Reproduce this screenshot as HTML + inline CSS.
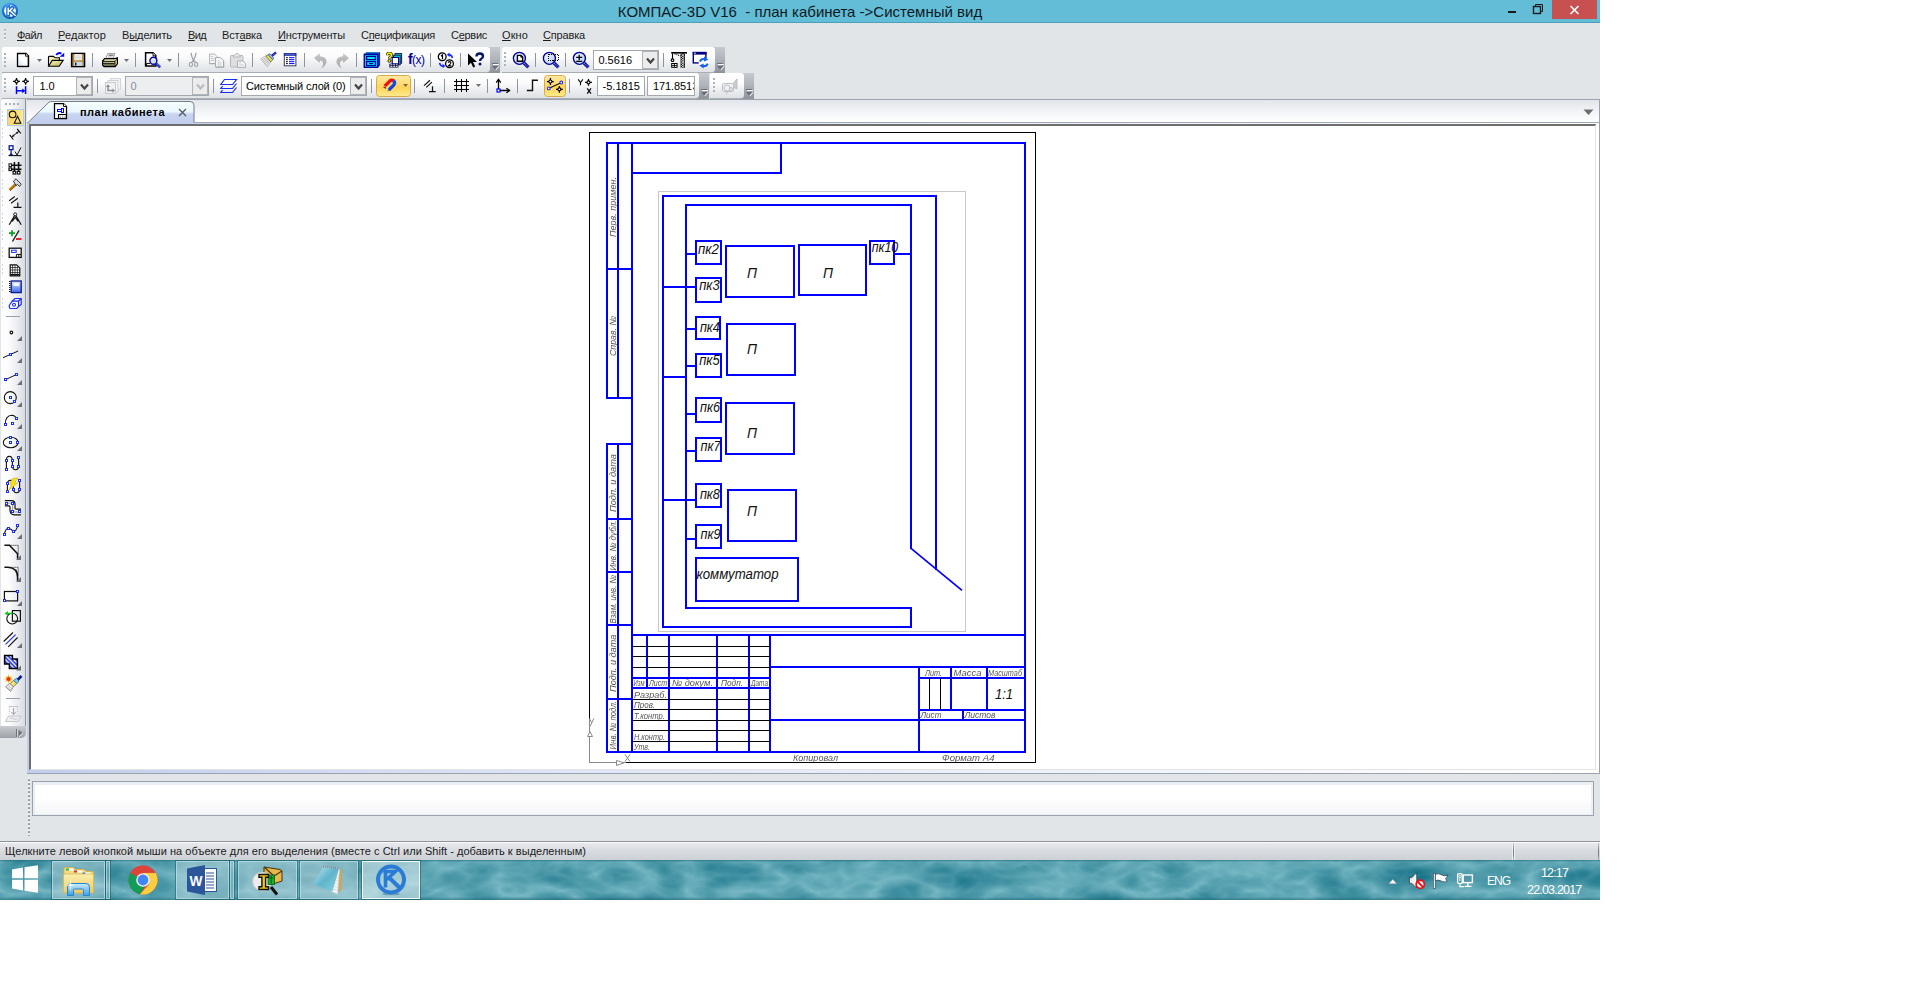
<!DOCTYPE html>
<html lang="ru"><head><meta charset="utf-8"><title>КОМПАС-3D V16 - план кабинета</title>
<style>

html,body{margin:0;padding:0;background:#fff;}
body{width:1920px;height:988px;position:relative;overflow:hidden;font-family:"Liberation Sans",sans-serif;}
#win{position:absolute;left:0;top:0;width:1600px;height:900px;background:#e1e5e8;overflow:hidden;}
.a{position:absolute;display:block;}
.t{position:absolute;white-space:pre;line-height:1;}
#titlebar{left:0;top:0;width:1600px;height:22px;background:#63bdd6;border-bottom:1px solid #4c9fb8;}
#title{left:617px;top:4px;font-size:15px;color:#0d1a1f;width:366px;text-align:center;}
#closebtn{left:1552px;top:0;width:45px;height:19px;background:#c75050;}
#menubar{left:0;top:23px;width:1600px;height:24px;background:#e1e5e8;}
.mi{top:30px;font-size:11px;color:#1c1c1c;}
.mi u{text-decoration:underline;text-decoration-thickness:1px;text-underline-offset:1px;}
.tb{background:linear-gradient(#ffffff 0%,#fbfbfc 40%,#e9ebee 75%,#dfe2e6 100%);border-radius:3px 3px 3px 0;box-shadow:0 1px 0 #a9aeb5;}
.tbend{background:linear-gradient(#c6cacf 0%,#b0b4bb 45%,#8e939b 100%);border-radius:0;}
.sep{width:1px;background:#8f959d;}
.combo{background:#fff;border:1px solid #a3a8ae;box-sizing:border-box;overflow:hidden;}
.combo .dd{position:absolute;right:0;top:0;bottom:0;width:16px;box-sizing:border-box;background:#ececec;border:1px solid #b1b5bb;}
.ctext{font-size:11px;color:#000;}
#tabbar{left:27px;top:99px;width:1573px;height:24px;box-sizing:border-box;background:linear-gradient(#e2e5ea 0%,#f0f2f5 45%,#ffffff 100%);border-top:1px solid #9ba3ae;border-right:1px solid #9ba3ae;border-bottom:1px solid #a0a8b4;}
#lefttb{left:1px;top:99px;width:24px;height:627px;background:linear-gradient(90deg,#ffffff 0%,#fbfbfc 35%,#eceef1 65%,#d9dce1 100%);border-radius:4px 0 0 0;border-right:1px solid #8e939b;}
#docframe{left:27px;top:123px;width:1573px;height:651px;background:linear-gradient(90deg,#c1cdeb 0%,#dfe6f7 35%,#ffffff 100%);}
#docframe .bR{right:0;top:0;bottom:0;width:1px;background:#9ba3ae;}
#docframe .bB{left:0;right:0;bottom:0;height:1px;background:#9ba3ae;}
#docinner{left:2px;top:1px;width:1567px;height:646px;background:#fff;box-sizing:border-box;border-left:2px solid #6e6e6e;border-top:2px solid #6e6e6e;border-right:1px solid #e3e3e3;border-bottom:1px solid #e3e3e3;}
#msgbox{left:32px;top:781px;width:1562px;height:35px;box-sizing:border-box;border:1px solid #9ca2ad;background:linear-gradient(#ffffff 0%,#ffffff 45%,#f4f5f7 100%);box-shadow:inset 0 3px 0 #ebeef3, inset 2px 0 0 #ebeef3, inset -2px 0 0 #ebeef3, inset 0 -1px 0 #ebeef3;}
#statusbar{left:0;top:841px;width:1600px;height:19px;box-sizing:border-box;border-top:1px solid #8c9199;background:linear-gradient(#fafbfc 0px,#fafbfc 1px,#e7e9ed 1px,#d8dbe0 50%,#cdd0d5 100%);}
#stattext{left:5px;top:846px;font-size:11px;color:#1a1a1a;}
#taskbar{left:0;top:860px;width:1600px;height:40px;background:#3f8b97;overflow:hidden;}
.tbtn{top:861px;height:38px;box-sizing:border-box;border:1px solid rgba(200,232,236,.62);background:rgba(205,226,230,.40);box-shadow:0 0 0 1px rgba(22,84,98,.5);}
.dr{font-family:"Liberation Sans",sans-serif;font-style:italic;}

</style></head>
<body>
<div id="win">
<div class="a" id="titlebar"></div>
<svg class="a" style="left:1px;top:2px" width="18" height="18" viewBox="0 0 18 18">
<defs><radialGradient id="kg" cx="42%" cy="22%" r="85%"><stop offset="0" stop-color="#4aa8f8"/><stop offset="0.55" stop-color="#1f74d6"/><stop offset="1" stop-color="#0f489e"/></radialGradient>
<clipPath id="kc"><circle cx="9" cy="9" r="5.9"/></clipPath></defs>
<circle cx="9" cy="9" r="8.1" fill="url(#kg)"/>
<circle cx="9" cy="9" r="5.9" fill="#fff"/>
<g clip-path="url(#kc)"><path d="M7.2 3V15.5M7.6 9.6L13 4.2M8.6 8.2L15.5 14.6" stroke="#1f6fd0" stroke-width="4" fill="none"/></g>
<path d="M7.2 5.6V13M7.8 9.4L11.6 5.8M9.2 8.8L14.6 13.8" stroke="#fff" stroke-width="1.4" fill="none"/>
</svg>
<span class="t" id="title">КОМПАС-3D V16  - план кабинета -&gt;Системный вид</span>
<div class="a" style="left:1508px;top:11px;width:8px;height:2px;background:#1a1a1a"></div>
<svg class="a" style="left:1532px;top:3px" width="13" height="12" viewBox="0 0 13 12"><path d="M3.5 3.5V1.5H10.5V8.5H8.5" fill="none" stroke="#1a1a1a" stroke-width="1"/><rect x="1.5" y="3.5" width="7" height="7" fill="none" stroke="#1a1a1a" stroke-width="1.4"/></svg>
<div class="a" id="closebtn"></div>
<svg class="a" style="left:1569px;top:5px" width="11" height="10" viewBox="0 0 11 10"><path d="M1.5 1L9.5 9M9.5 1L1.5 9" stroke="#fff" stroke-width="1.6" fill="none"/></svg>
<div class="a" id="menubar"></div>
<div class="a" style="left:4px;top:29px;width:2px;height:11px;background:repeating-linear-gradient(#b3bac4 0 2px,#f6f7f9 2px 3px,transparent 3px 4px)"></div>
<span class="t mi" style="left:17px;width:25px;letter-spacing:-0.516px"><u>Ф</u>айл</span>
<span class="t mi" style="left:58px;width:48px;letter-spacing:0.080px"><u>Р</u>едактор</span>
<span class="t mi" style="left:122px;width:50px;letter-spacing:-0.096px">В<u>ы</u>делить</span>
<span class="t mi" style="left:188px;width:18px;letter-spacing:-0.641px"><u>В</u>ид</span>
<span class="t mi" style="left:222px;width:40px;letter-spacing:-0.129px">Вст<u>а</u>вка</span>
<span class="t mi" style="left:278px;width:67px;letter-spacing:-0.145px"><u>И</u>нструменты</span>
<span class="t mi" style="left:361px;width:74px;letter-spacing:-0.272px">С<u>п</u>ецификация</span>
<span class="t mi" style="left:451px;width:36px;letter-spacing:-0.281px">С<u>е</u>рвис</span>
<span class="t mi" style="left:502px;width:26px;letter-spacing:0.105px"><u>О</u>кно</span>
<span class="t mi" style="left:543px;width:42px;letter-spacing:-0.167px"><u>С</u>правка</span>
<div class="a tbend" style="left:486px;top:47px;width:14px;height:26px;"></div>
<div class="a tb" style="left:2px;top:47px;width:488px;height:25px;"></div>
<div class="a tbend" style="left:710px;top:47px;width:15px;height:26px;"></div>
<div class="a tb" style="left:502px;top:47px;width:213px;height:25px;"></div>
<div class="a tbend" style="left:694px;top:73px;width:15px;height:26px;"></div>
<div class="a tb" style="left:2px;top:73px;width:697px;height:25px;"></div>
<div class="a tbend" style="left:739px;top:73px;width:15px;height:26px;"></div>
<div class="a tb" style="left:710px;top:73px;width:34px;height:25px;"></div>
<svg class="a" style="left:492px;top:63px" width="8" height="8" viewBox="0 0 8 8"><rect x="0" y="0" width="6" height="1" fill="#6b7078"/><rect x="1" y="1" width="6" height="1" fill="#fff"/><path d="M0 3H6.4L3.2 6.8Z" fill="#6b7078"/><path d="M6.9 3.3L3.8 7" stroke="#fff" stroke-width="1"/></svg>
<svg class="a" style="left:717px;top:63px" width="8" height="8" viewBox="0 0 8 8"><rect x="0" y="0" width="6" height="1" fill="#6b7078"/><rect x="1" y="1" width="6" height="1" fill="#fff"/><path d="M0 3H6.4L3.2 6.8Z" fill="#6b7078"/><path d="M6.9 3.3L3.8 7" stroke="#fff" stroke-width="1"/></svg>
<svg class="a" style="left:701px;top:89px" width="8" height="8" viewBox="0 0 8 8"><rect x="0" y="0" width="6" height="1" fill="#6b7078"/><rect x="1" y="1" width="6" height="1" fill="#fff"/><path d="M0 3H6.4L3.2 6.8Z" fill="#6b7078"/><path d="M6.9 3.3L3.8 7" stroke="#fff" stroke-width="1"/></svg>
<svg class="a" style="left:746px;top:89px" width="8" height="8" viewBox="0 0 8 8"><rect x="0" y="0" width="6" height="1" fill="#6b7078"/><rect x="1" y="1" width="6" height="1" fill="#fff"/><path d="M0 3H6.4L3.2 6.8Z" fill="#6b7078"/><path d="M6.9 3.3L3.8 7" stroke="#fff" stroke-width="1"/></svg>
<div class="a" style="left:4px;top:53px;width:2px;height:14px;background:repeating-linear-gradient(#aab2bd 0 2px,transparent 2px 4px)"></div>
<div class="a" style="left:4px;top:78px;width:2px;height:16px;background:repeating-linear-gradient(#aab2bd 0 2px,transparent 2px 4px)"></div>
<div class="a" style="left:504px;top:52px;width:2px;height:16px;background:repeating-linear-gradient(#aab2bd 0 2px,transparent 2px 4px)"></div>
<div class="a" style="left:713px;top:78px;width:2px;height:16px;background:repeating-linear-gradient(#aab2bd 0 2px,transparent 2px 4px)"></div>
<div class="a combo" style="left:593px;top:50px;width:66px;height:20px;background:#fff"><span class="t ctext" style="left:4.5px;top:4px;color:#000;width:33.5px;letter-spacing:-0.026px">0.5616</span><span class="dd"><svg class="a" style="left:3px;top:5px" width="9" height="8" viewBox="0 0 9 8"><path d="M1 1.5L4.5 5.5L8 1.5" fill="none" stroke="#454545" stroke-width="2.2"/></svg></span></div>
<div class="a combo" style="left:33px;top:76px;width:60px;height:20px;background:#fff"><span class="t ctext" style="left:5.5px;top:4px;color:#000;width:15px;letter-spacing:-0.099px">1.0</span><span class="dd"><svg class="a" style="left:3px;top:5px" width="9" height="8" viewBox="0 0 9 8"><path d="M1 1.5L4.5 5.5L8 1.5" fill="none" stroke="#454545" stroke-width="2.2"/></svg></span></div>
<div class="a combo" style="left:125px;top:76px;width:84px;height:20px;background:#eceef0"><span class="t ctext" style="left:4.5px;top:4px;color:#8a8f96">0</span><span class="dd"><svg class="a" style="left:3px;top:5px" width="9" height="8" viewBox="0 0 9 8"><path d="M1 1.5L4.5 5.5L8 1.5" fill="none" stroke="#b9bcc1" stroke-width="2.2"/></svg></span></div>
<div class="a combo" style="left:241px;top:76px;width:126px;height:20px;background:#fff"><span class="t ctext" style="left:4px;top:4px;color:#000;width:99.5px;letter-spacing:-0.148px">Системный слой (0)</span><span class="dd"><svg class="a" style="left:3px;top:5px" width="9" height="8" viewBox="0 0 9 8"><path d="M1 1.5L4.5 5.5L8 1.5" fill="none" stroke="#454545" stroke-width="2.2"/></svg></span></div>
<div class="a combo" style="left:597px;top:76px;width:48px;height:20px;background:#fff"><span class="t ctext" style="left:4.5px;top:4px;color:#000;width:37.5px;letter-spacing:0.027px">-5.1815</span></div>
<div class="a combo" style="left:647px;top:76px;width:48px;height:20px;background:#fff"><span class="t ctext" style="left:5px;top:4px;color:#000;width:39px;letter-spacing:-0.109px">171.851</span><span class="t ctext" style="left:44.6px;top:4px">3</span></div>
<div class="a" style="left:376px;top:75px;width:35px;height:22px;background:linear-gradient(#ffe9a2 0%,#ffd968 48%,#ffd257 55%,#ffe98c 100%);border:1px solid #d6aa48;border-radius:3.5px;box-sizing:border-box;"></div>
<div class="a" style="left:544px;top:75px;width:22px;height:22px;background:linear-gradient(#ffe9a2 0%,#ffd968 48%,#ffd257 55%,#ffe98c 100%);border:1px solid #d6aa48;border-radius:3.5px;box-sizing:border-box;"></div>
<div class="a sep" style="left:92px;top:53px;width:1px;height:14px;"></div>
<div class="a sep" style="left:135px;top:53px;width:1px;height:14px;"></div>
<div class="a sep" style="left:178px;top:53px;width:1px;height:14px;"></div>
<div class="a sep" style="left:252px;top:53px;width:1px;height:14px;"></div>
<div class="a sep" style="left:304px;top:53px;width:1px;height:14px;"></div>
<div class="a sep" style="left:356px;top:53px;width:1px;height:14px;"></div>
<div class="a sep" style="left:430px;top:53px;width:1px;height:14px;"></div>
<div class="a sep" style="left:460px;top:53px;width:1px;height:14px;"></div>
<div class="a sep" style="left:535px;top:53px;width:1px;height:14px;"></div>
<div class="a sep" style="left:565px;top:53px;width:1px;height:14px;"></div>
<div class="a sep" style="left:663px;top:53px;width:1px;height:14px;"></div>
<div class="a sep" style="left:97px;top:79px;width:1px;height:14px;"></div>
<div class="a sep" style="left:213px;top:79px;width:1px;height:14px;"></div>
<div class="a sep" style="left:371px;top:79px;width:1px;height:14px;"></div>
<div class="a sep" style="left:414px;top:79px;width:1px;height:14px;"></div>
<div class="a sep" style="left:444px;top:79px;width:1px;height:14px;"></div>
<div class="a sep" style="left:487px;top:79px;width:1px;height:14px;"></div>
<div class="a sep" style="left:517px;top:79px;width:1px;height:14px;"></div>
<div class="a sep" style="left:569px;top:79px;width:1px;height:14px;"></div>
<div class="a" id="docframe"><div class="a bR"></div><div class="a bB"></div><div class="a" id="docinner"></div></div>
<div class="a" id="tabbar"></div>
<svg class="a" style="left:27px;top:100px" width="180" height="24" viewBox="0 0 180 24">
<defs><linearGradient id="tabg" x1="0" y1="0" x2="0" y2="1"><stop offset="0" stop-color="#f4feff"/><stop offset="0.45" stop-color="#ebf7fe"/><stop offset="0.56" stop-color="#c8d5f1"/><stop offset="1" stop-color="#c1cdeb"/></linearGradient></defs>
<path d="M0 24L0.5 23L22 2.2Q23 1.5 25 1.5H163Q167 1.5 167 5.5V24Z" fill="url(#tabg)"/>
<path d="M0.5 23L22 2.2Q23 1.5 25 1.5H163Q167 1.5 167 5.5V22.5" fill="none" stroke="#767c88" stroke-width="1"/>
</svg>
<svg class="a" style="left:53px;top:102px" width="15" height="18" viewBox="0 0 15 18">
<path d="M1.5 1.5H10.5L13.5 4.5V16.5H1.5Z" fill="#fff" stroke="#000" stroke-width="1.25"/><path d="M10.5 1.5V4.5H13.5" fill="#fff" stroke="#000" stroke-width="0.9"/>
<rect x="8.5" y="6.5" width="2" height="4" fill="#fff" stroke="#0000ff" stroke-width="1" shape-rendering="crispEdges"/><rect x="4.5" y="7.5" width="4" height="2" fill="#fff" stroke="#0000ff" stroke-width="1" shape-rendering="crispEdges"/>
<path d="M5.5 16.5V12.5H13.5" fill="none" stroke="#000" stroke-width="1.1"/><path d="M6.6 14H8M9 14H10.4M11.4 14H12.8M6.6 15.5H8M9 15.5H10.4M11.4 15.5H12.8" stroke="#8c8c8c" stroke-width="0.9"/></svg>
<span class="t" id="tabtext" style="left:80px;top:107px;font-size:11px;font-weight:bold;color:#000;width:85px;letter-spacing:0.480px">план кабинета</span>
<svg class="a" style="left:178px;top:108px" width="9" height="9" viewBox="0 0 9 9"><path d="M1 1L8 8M8 1L1 8" stroke="#55595f" stroke-width="1.3"/></svg>
<svg class="a" style="left:1583px;top:109px" width="11" height="7" viewBox="0 0 11 7"><path d="M0.5 0.5H10.5L5.5 6Z" fill="#6e6e6e"/></svg>
<div class="a" id="lefttb"></div>
<div class="a" style="left:0px;top:726px;width:26px;height:12px;background:linear-gradient(#c9ccd1,#9da2a9);border-radius:0 0 5px 0"></div>
<svg class="a" style="left:16px;top:729px" width="8" height="9" viewBox="0 0 8 9"><path d="M1 0.5V8.5" stroke="#fff" stroke-width="1"/><path d="M3 1L7 4.5L3 8Z" fill="#fff"/><path d="M0.5 0V8" stroke="#6b7078" stroke-width="1"/><path d="M2.5 0.5L6.5 4L2.5 7.5Z" fill="#6b7078"/></svg>
<div class="a" style="left:5px;top:103px;width:16px;height:2px;background:repeating-linear-gradient(90deg,#aab2bd 0 2px,transparent 2px 4px)"></div>
<div class="a" style="left:7px;top:109px;width:17px;height:17px;background:linear-gradient(90deg,#ffd56a,#ffe88c);border:1px solid #a9cdee;box-sizing:border-box;"></div>
<div class="a" style="left:2px;top:109px;width:1px;height:204px;background:repeating-linear-gradient(transparent 0 2px,#ccd3e2 2px 4px,transparent 4px 6px,#ccd3e2 6px 8px,transparent 8px 10px,#ccd3e2 10px 12px,transparent 12px 17px)"></div>
<div class="a" style="left:6px;top:316px;width:14px;height:1px;background:#9a9fa6"></div>
<div class="a" style="left:6px;top:698px;width:14px;height:1px;background:#9a9fa6"></div>
<div class="a" style="left:28px;top:778px;width:2px;height:58px;background:repeating-linear-gradient(#ffffff 0 1px,#9aa1ab 1px 3px,transparent 3px 4px)"></div>
<div class="a" id="msgbox"></div>
<div class="a" id="statusbar"></div>
<span class="t" id="stattext" style="width:581px;letter-spacing:0.039px">Щелкните левой кнопкой мыши на объекте для его выделения (вместе с Ctrl или Shift - добавить к выделенным)</span>
<div class="a" style="left:1512px;top:843px;width:3px;height:17px;background:linear-gradient(90deg,#eef0f3 0 1px,transparent 1px 2px,#eef0f3 2px 3px)"></div>
<div class="a" style="left:1513px;top:843px;width:1px;height:17px;background:linear-gradient(#c2c5ca,#7c7f85 45%,#7c7f85 70%,#b8bbc0)"></div>
<div class="a" style="left:1598px;top:843px;width:1px;height:17px;background:linear-gradient(#c2c5ca,#7c7f85 45%,#7c7f85 70%,#b8bbc0)"></div>
<svg class="a" style="left:16px;top:52px" width="14" height="16" viewBox="0 0 14 16"><defs><linearGradient id="ndg" x1="1" y1="0" x2="0" y2="1"><stop offset="0.5" stop-color="#fff"/><stop offset="1" stop-color="#cfe0f6"/></linearGradient></defs><path d="M1.5 1.5H10L12.3 3.8V14.3H1.5Z" fill="url(#ndg)" stroke="#000" stroke-width="1.3"/><path d="M12.7 3.5V14.7H1.2" fill="none" stroke="#000" stroke-width="0.9"/><path d="M9.6 1.5V4.2H12.3" fill="#fff" stroke="#000" stroke-width="0.9"/></svg>
<svg class="a" style="left:37px;top:59px" width="5" height="3" viewBox="0 0 5 3"><path d="M0 0H5L2.5 3Z" fill="#6b6f76"/></svg>
<svg class="a" style="left:47px;top:51px" width="19" height="17" viewBox="0 0 19 17"><defs><linearGradient id="ofg" x1="0" y1="0" x2="1" y2="1"><stop offset="0" stop-color="#fbf8c8"/><stop offset="1" stop-color="#b9b24e"/></linearGradient></defs><path d="M1.5 15V6.2Q1.5 5.4 2.3 5.4H6.6L8 6.8H12.4V9.4" fill="#f4f0b4" stroke="#000" stroke-width="1.1"/><path d="M1.6 15.2L5.2 9.4H16.2L12.2 15.2Z" fill="url(#ofg)" stroke="#000" stroke-width="1.1"/><path d="M9.2 4Q11.2 0.8 14.4 2.6" fill="none" stroke="#0000ff" stroke-width="1.9"/><path d="M12.6 5.8H17.2V1.8Z" fill="#0000ff"/></svg>
<svg class="a" style="left:70px;top:52px" width="16" height="16" viewBox="0 0 16 16"><defs><linearGradient id="flg" x1="0" y1="0" x2="1" y2="0"><stop offset="0" stop-color="#8a6a30"/><stop offset="0.3" stop-color="#c9a35a"/><stop offset="1" stop-color="#b08840"/></linearGradient></defs><rect x="1.6" y="1.4" width="13" height="13.2" fill="url(#flg)" stroke="#000" stroke-width="1.4"/><rect x="4.4" y="2.2" width="7.5" height="6" fill="#fbfbfb"/><path d="M5 4H11.4M5 5.6H11.4M5 7.2H11.4" stroke="#c4c4c4" stroke-width="0.7"/><rect x="3.8" y="10" width="8.6" height="3.9" fill="#c4d6ea"/><rect x="5" y="10.6" width="1.4" height="2.9" fill="#111"/></svg>
<svg class="a" style="left:101px;top:52px" width="18" height="16" viewBox="0 0 18 16"><path d="M4.6 6.6L6.8 1.6H14L12 6.6Z" fill="#fff" stroke="#8a8a8a" stroke-width="0.9"/><path d="M7.6 3.2H12.4" stroke="#555" stroke-width="1.1"/><path d="M6.8 5H11.6" stroke="#9a9a9a" stroke-width="0.8"/><path d="M1.6 9L3.6 6.6H14.2L16.4 5.8V11.8L14.2 14.6H3L1.6 13Z" fill="#e6e2b0" stroke="#000" stroke-width="1.2"/><path d="M1.8 9.4H14L16.2 7.2M14 9.4V14.4" fill="none" stroke="#000" stroke-width="0.9"/><path d="M2 11.3H13.8M2.4 13H13.6" stroke="#000" stroke-width="1"/><path d="M14.6 12.6L15.8 11" stroke="#c8b020" stroke-width="1"/></svg>
<svg class="a" style="left:124px;top:59px" width="5" height="3" viewBox="0 0 5 3"><path d="M0 0H5L2.5 3Z" fill="#6b6f76"/></svg>
<svg class="a" style="left:144px;top:51px" width="18" height="18" viewBox="0 0 18 18"><path d="M1.6 1.8H9L11.8 4.6V15H1.6Z" fill="#fff" stroke="#000" stroke-width="1.5"/><path d="M9 1.8V4.8H11.8" fill="#fff" stroke="#000" stroke-width="0.9"/><path d="M2.6 15V12.4H6" fill="none" stroke="#000" stroke-width="1"/><circle cx="9.4" cy="9.8" r="3.5" fill="#d4e2ee" stroke="#00009a" stroke-width="1.4"/><path d="M8 8.2Q9.4 7.2 10.8 8.2" stroke="#fff" stroke-width="0.9" fill="none"/><path d="M12 12.4L16.2 16.2" stroke="#1a2ab8" stroke-width="2.6"/><path d="M12.6 12.4L16.4 15.8" stroke="#8a9af0" stroke-width="0.7"/></svg>
<svg class="a" style="left:167px;top:59px" width="5" height="3" viewBox="0 0 5 3"><path d="M0 0H5L2.5 3Z" fill="#6b6f76"/></svg>
<svg class="a" style="left:187px;top:52px" width="13" height="16" viewBox="0 0 13 16"><path d="M4 0.8Q4.6 5 6.6 8.6M9 0.8Q8.4 5 6.4 8.6" stroke="#9b9ea3" stroke-width="1.2" fill="none"/><path d="M6.6 8.2L4.6 10.4M6.4 8.2L8.6 10.4" stroke="#9b9ea3" stroke-width="1.1"/><ellipse cx="3.9" cy="12.4" rx="1.6" ry="2.1" fill="none" stroke="#9b9ea3" stroke-width="1.1"/><ellipse cx="9.1" cy="12.4" rx="1.6" ry="2.1" fill="none" stroke="#9b9ea3" stroke-width="1.1"/></svg>
<svg class="a" style="left:208px;top:52px" width="17" height="16" viewBox="0 0 17 16"><path d="M1.5 2H6.5L9 4.5V11.5H1.5Z" fill="#f4f4f4" stroke="#b4b6ba" stroke-width="1"/><path d="M7.5 5.5H12.5L15.5 8.5V15H7.5Z" fill="#f6f6f6" stroke="#a9acb0" stroke-width="1"/><path d="M1.5 11.8H7.2M15.8 8.8V15.3H7.8" stroke="#a0a3a7" stroke-width="0.8" fill="none"/><path d="M3 4.5H5M3 6.5H6.5M3 8.5H6.5M9.5 9H11.5M9.5 11H13.5M9.5 13H13.5" stroke="#c0c3c7" stroke-width="0.9"/></svg>
<svg class="a" style="left:229px;top:52px" width="18" height="16" viewBox="0 0 18 16"><rect x="1.5" y="3.5" width="12.5" height="11.5" rx="0.8" fill="#dedede" stroke="#b6b8bc" stroke-width="1"/><path d="M4.5 5V3.6Q5 3.2 6 3L6.8 1.6H9L9.8 3Q10.8 3.2 11.2 3.6V5Z" fill="#ececec" stroke="#b0b3b7" stroke-width="0.9"/><path d="M8.5 9H13.6L16.4 11.4V15.4H8.5Z" fill="#f8f8f8" stroke="#a9acb0" stroke-width="1"/><path d="M10 11H12M10 13H14.6" stroke="#c0c3c7" stroke-width="0.9"/></svg>
<svg class="a" style="left:260px;top:51px" width="17" height="17" viewBox="0 0 17 17"><path d="M11.9 4.9L16 1.4" stroke="#1a1aa0" stroke-width="2.4"/><path d="M12.6 4.3L15.6 1.8" stroke="#5a6ae0" stroke-width="0.7"/><path d="M5.9 4.9L10.9 10.9L7.2 15.7L0.5 7.8Z" fill="#fdfdfd" stroke="#9a9a9a" stroke-width="0.6"/><path d="M6.7 5.9L1.7 9.2M7.6 6.9L2.8 10.5M8.4 7.9L3.8 11.8M9.2 8.9L4.9 13.1M10.1 9.8L6.0 14.3M4.4 5.7L9.9 12.2M3.0 6.5L9.0 13.5M1.5 7.3L8.0 14.8" stroke="#a8a8a8" stroke-width="0.55" fill="none"/><path d="M8.3 3.6L12.6 8.6L10.9 10.9L5.9 4.9Z" fill="#f0e23c" stroke="#6a6a2a" stroke-width="0.7"/><path d="M10.1 2.8L13.7 7.0L12.6 8.6L8.3 3.6Z" fill="#a8d4f6" stroke="#2a4ac0" stroke-width="0.8"/></svg>
<svg class="a" style="left:283px;top:52px" width="14" height="15" viewBox="0 0 14 15"><rect x="1.3" y="1.6" width="11.6" height="12.2" fill="#fff" stroke="#3a3a5a" stroke-width="1"/><rect x="0.9" y="1.2" width="12.4" height="2.6" fill="#1c2c9c"/><path d="M2 2.3H12" stroke="#6a8ae8" stroke-width="0.7"/><path d="M3 5.7H4.8M3 7.7H4.8M3 9.7H4.8M3 11.6H4.8" stroke="#000" stroke-width="1"/><path d="M6 5.7H11.4M6 7.7H11.4M6 9.7H11.4M6 11.6H11.4" stroke="#0000ff" stroke-width="1"/></svg>
<svg class="a" style="left:313px;top:52px" width="16" height="17" viewBox="0 0 16 17"><defs><linearGradient id="udg" x1="0" y1="0" x2="0" y2="1"><stop offset="0" stop-color="#c8c8c8"/><stop offset="1" stop-color="#a4a4a4"/></linearGradient></defs><path d="M1 6L6.8 1.2V4.2Q13.4 4.4 13.6 9.6Q13.4 13.4 8.4 16.4Q10.8 13 10 10.6Q9.2 8.4 6.8 8.4V11Z" fill="url(#udg)"/></svg>
<svg class="a" style="left:334px;top:52px" width="16" height="17" viewBox="0 0 16 17"><path d="M15 6L9.2 1.2V4.2Q2.6 4.4 2.4 9.6Q2.6 13.4 7.6 16.4Q5.2 13 6 10.6Q6.8 8.4 9.2 8.4V11Z" fill="url(#udg)"/></svg>
<svg class="a" style="left:363px;top:52px" width="18" height="16" viewBox="0 0 18 16"><path d="M1.4 2.4L3.4 0.6H16.6V13.4L14.6 15.4H1.4Z" fill="#1030d8" stroke="#00009a" stroke-width="0.8"/><path d="M2 2L3.6 0.9H16" stroke="#30d0e8" stroke-width="0.8" fill="none"/><rect x="1.4" y="2.4" width="13.2" height="13" fill="#00f2ff" stroke="#00009a" stroke-width="1.5"/><rect x="3.6" y="4.4" width="8.8" height="3.2" fill="#00f2ff" stroke="#00009a" stroke-width="1.3"/><rect x="3.6" y="9.6" width="8.8" height="4" fill="#00f2ff" stroke="#00009a" stroke-width="1.3"/><path d="M6 11.6H10.2" stroke="#00009a" stroke-width="1.2"/></svg>
<svg class="a" style="left:386px;top:52px" width="17" height="16" viewBox="0 0 17 16"><rect x="9" y="1.6" width="6.6" height="9.6" fill="#00f2ff" stroke="#1a1a3a" stroke-width="1"/><rect x="7.6" y="3.2" width="6.6" height="9.6" fill="#00f2ff" stroke="#1a1a3a" stroke-width="1"/><rect x="6.2" y="5.4" width="6.4" height="6.6" fill="#fff" stroke="#00007a" stroke-width="1.2"/><rect x="3.4" y="11.7" width="9" height="3.8" fill="#00003a"/><path d="M4.4 12.8H6.4M7.2 12.8H9M9.8 12.8H11.6M4.4 14.4H6.4M7.2 14.4H9M9.8 14.4H11.6" stroke="#fff" stroke-width="0.9"/><path d="M1.3 3.2Q1.3 1.2 3.3 1.2Q5.4 1.2 5.4 3Q5.4 4.2 4.3 4.9Q3.4 5.4 3.4 6.6" fill="none" stroke="#000" stroke-width="2.9"/><path d="M1.3 3.2Q1.3 1.2 3.3 1.2Q5.4 1.2 5.4 3Q5.4 4.2 4.3 4.9Q3.4 5.4 3.4 6.6" fill="none" stroke="#ffee00" stroke-width="1.7"/><circle cx="3.4" cy="8.8" r="1.5" fill="#ffee00" stroke="#000" stroke-width="0.8"/></svg>
<span class="t" style="left:408px;top:52px;font-size:14px;font-weight:bold;color:#00009a;letter-spacing:-0.6px">f<span style="font-weight:normal;font-size:12px;letter-spacing:-0.5px;position:relative;top:-0.5px">(x)</span></span>
<svg class="a" style="left:437px;top:52px" width="18" height="17" viewBox="0 0 18 17"><circle cx="5.2" cy="4.8" r="3.9" fill="#fff" stroke="#000" stroke-width="1.3"/><path d="M4 4.2L5.5 2.8V7.2" fill="none" stroke="#000" stroke-width="1.2"/><circle cx="12.5" cy="11.7" r="3.9" fill="#fff" stroke="#000" stroke-width="1.3"/><path d="M11 10.6Q12.4 9 13.8 10.2Q14.4 11.4 11.2 13.9H14.4" fill="none" stroke="#000" stroke-width="1.1"/><path d="M11.4 2.6Q14.8 2.6 15.4 6" fill="none" stroke="#1a2aff" stroke-width="1.6"/><path d="M9.8 2.8L12.6 0.6V5Z" fill="#1a2aff"/><path d="M6.6 14.2Q3.2 14.4 2.6 10.8" fill="none" stroke="#1a2aff" stroke-width="1.6"/><path d="M8.4 14L5.6 11.8V16.2Z" fill="#1a2aff"/></svg>
<svg class="a" style="left:467px;top:52px" width="18" height="17" viewBox="0 0 18 17"><path d="M1 1.5V13.5L4 10.8L6.2 15.5L8.2 14.5L6 10H10Z" fill="#000"/><path d="M9.5 4.5Q9.5 1.5 12.8 1.5Q16 1.5 16 4.2Q16 6 14 7Q13 7.6 13 9" fill="none" stroke="#0a1466" stroke-width="2.4"/><circle cx="13" cy="12" r="1.5" fill="#0a1466"/></svg>
<svg class="a" style="left:512px;top:51px" width="18" height="18" viewBox="0 0 18 18"><defs><linearGradient id="lens512" x1="0" y1="0" x2="1" y2="1"><stop offset="0" stop-color="#f4f8ff"/><stop offset="1" stop-color="#b4ccf6"/></linearGradient></defs><path d="M12 12L16.4 16.4" stroke="#00009a" stroke-width="3.2"/><path d="M12.4 12.4L16.4 16.4" stroke="#9ab0ee" stroke-width="1.2" stroke-dasharray="0.8 0.8"/><circle cx="7.4" cy="7.3" r="6" fill="url(#lens512)" stroke="#00009a" stroke-width="1.35"/><path d="M5.4 4.4H9L10.6 6V10.2H5.4Z" fill="#fff" stroke="#000" stroke-width="1.4"/><path d="M8.8 4.4V6.2H10.6" fill="none" stroke="#000" stroke-width="0.9"/></svg>
<svg class="a" style="left:542px;top:51px" width="18" height="18" viewBox="0 0 18 18"><defs><linearGradient id="lens542" x1="0" y1="0" x2="1" y2="1"><stop offset="0" stop-color="#f4f8ff"/><stop offset="1" stop-color="#b4ccf6"/></linearGradient></defs><path d="M12 12L16.4 16.4" stroke="#00009a" stroke-width="3.2"/><path d="M12.4 12.4L16.4 16.4" stroke="#9ab0ee" stroke-width="1.2" stroke-dasharray="0.8 0.8"/><circle cx="7.4" cy="7.3" r="6" fill="url(#lens542)" stroke="#00009a" stroke-width="1.35"/><rect x="6.5" y="3.5" width="10" height="6" fill="none" stroke="#000" stroke-width="1.2" stroke-dasharray="1.1 1" shape-rendering="crispEdges"/></svg>
<svg class="a" style="left:572px;top:51px" width="18" height="18" viewBox="0 0 18 18"><defs><linearGradient id="lens572" x1="0" y1="0" x2="1" y2="1"><stop offset="0" stop-color="#f4f8ff"/><stop offset="1" stop-color="#b4ccf6"/></linearGradient></defs><path d="M12 12L16.4 16.4" stroke="#00009a" stroke-width="3.2"/><path d="M12.4 12.4L16.4 16.4" stroke="#9ab0ee" stroke-width="1.2" stroke-dasharray="0.8 0.8"/><circle cx="7.4" cy="7.3" r="6" fill="url(#lens572)" stroke="#00009a" stroke-width="1.35"/><path d="M4.2 6.4H10.2M7.2 3.8V9.2M4.2 10.4H10.2" stroke="#000" stroke-width="1.25"/></svg>
<svg class="a" style="left:670px;top:51px" width="18" height="18" viewBox="0 0 18 18"><rect x="1.2" y="1" width="15.8" height="1.6" fill="#000"/><rect x="10.6" y="2.4" width="4.4" height="14.4" fill="#000"/><path d="M11.3 3L14.3 5.3L11.3 7.6L14.3 9.9L11.3 12.2L14.3 14.5L11.3 16.6M14.3 3L11.3 5.3L14.3 7.6L11.3 9.9L14.3 12.2L11.3 14.5L14.3 16.6" stroke="#fff" stroke-width="0.75" fill="none"/><path d="M4.6 2.8L10.6 5" stroke="#000" stroke-width="1.2" stroke-dasharray="1 0.9"/><path d="M2.5 2.4V7.8" stroke="#000" stroke-width="1.1"/><circle cx="2.5" cy="9.2" r="1.35" fill="none" stroke="#000" stroke-width="1.1"/><rect x="1.2" y="12" width="6.4" height="4.8" fill="#000"/><path d="M2.2 13.5H3.9M4.9 13.5H6.6M2.2 15.3H3.9M4.9 15.3H6.6" stroke="#fff" stroke-width="1"/></svg>
<svg class="a" style="left:692px;top:51px" width="18" height="18" viewBox="0 0 18 18"><rect x="1.3" y="1.5" width="12.6" height="10.4" fill="#fff" stroke="#000080" stroke-width="1.4"/><rect x="0.8" y="1" width="13.6" height="2.6" fill="#000080"/><rect x="2" y="1.7" width="1.8" height="0.9" fill="#fff"/><circle cx="11.8" cy="11.6" r="5.2" fill="#fff"/><path d="M8 10.6Q9.2 7.4 12.6 8.2" fill="none" stroke="#1460f0" stroke-width="2.1"/><path d="M12 5.6L16.4 8.8L12 10.6Z" fill="#1460f0"/><path d="M15.6 12.6Q14.4 15.8 11 15" fill="none" stroke="#1460f0" stroke-width="2.1"/><path d="M11.6 12.6L7.2 14.4L11.6 17.6Z" fill="#1460f0"/></svg>
<svg class="a" style="left:12px;top:77px" width="18" height="18" viewBox="0 0 18 18"><path d="M1.1 4.4H7.9M4.5 1.0000000000000004V7.800000000000001" stroke="#000" stroke-width="1.25"/><circle cx="4.5" cy="4.4" r="1.5" fill="#fff" stroke="#000" stroke-width="1.15"/><path d="M10.2 4.4H17.0M13.6 1.0000000000000004V7.800000000000001" stroke="#000" stroke-width="1.25"/><circle cx="13.6" cy="4.4" r="1.5" fill="#fff" stroke="#000" stroke-width="1.15"/><path d="M4.5 9.2V17M13.6 9.2V17" stroke="#0000ff" stroke-width="1.5"/><path d="M4.5 13.8H12" stroke="#0000ff" stroke-width="1.5"/><path d="M13.4 13.8L10.2 11.4V16.2Z" fill="#0000ff"/></svg>
<svg class="a" style="left:103px;top:78px" width="19" height="16" viewBox="0 0 19 16"><rect x="7.5" y="0.5" width="10" height="11" fill="#f4f4f4" stroke="#d2d4d8" stroke-width="1"/><rect x="5" y="2.5" width="10" height="11.3" fill="#f4f4f4" stroke="#cdd0d4" stroke-width="1"/><rect x="2.5" y="4.5" width="10" height="11" fill="#f1f1f1" stroke="#c6c9cd" stroke-width="1"/><path d="M5 8V12.6H10" fill="none" stroke="#8a8d92" stroke-width="1.5"/><path d="M2.8 9L5 6.2L7.2 9ZM9.4 10.4L12 12.6L9.4 14.8Z" fill="#8a8d92"/></svg>
<svg class="a" style="left:220px;top:78px" width="18" height="16" viewBox="0 0 18 16"><path d="M4.5 1.5H16.5L12.5 6.5H0.8Z" fill="#fff" stroke="#1a2ff0" stroke-width="1.2"/><path d="M2.6 8.2L0.8 10.5H12.5L16.5 5.5" fill="none" stroke="#1a2ff0" stroke-width="1.2"/><path d="M2.6 12.2L0.8 14.5H12.5L16.5 9.5" fill="none" stroke="#1a2ff0" stroke-width="1.2"/></svg>
<svg class="a" style="left:382px;top:77px" width="17" height="17" viewBox="0 0 17 17"><path d="M2.7 9.2L8 3.9Q9.6 2.6 11.7 3.7" fill="none" stroke="#f01010" stroke-width="3.3"/><path d="M11.4 3.5Q13.6 5.6 11.8 7.9L6.8 13" fill="none" stroke="#1a4af0" stroke-width="3.3"/><path d="M1.6 10.2L4 11.2M5.6 14L8 12.4L12.6 8.4" fill="none" stroke="#0a1a90" stroke-width="0.9" opacity="0.7"/><path d="M1.7 10.4L3.9 11" stroke="#900" stroke-width="1"/></svg>
<svg class="a" style="left:403px;top:84px" width="5" height="3" viewBox="0 0 5 3"><path d="M0 0H5L2.5 3Z" fill="#7a6a45"/></svg>
<svg class="a" style="left:423px;top:79px" width="15" height="14" viewBox="0 0 15 14"><path d="M1 6.6L7 1.25M3.25 8.4L8.9 3.1" stroke="#111" stroke-width="1.15"/><path d="M9.5 7.2V12.4M6 12.5H12.7" stroke="#111" stroke-width="1.25"/></svg>
<svg class="a" style="left:453px;top:78px" width="17" height="16" viewBox="0 0 17 16"><path d="M1 3.5H16M1 7.5H16M1 11.5H16M3.5 1V14M8.5 1V14M13.5 1V14" stroke="#000" stroke-width="1" shape-rendering="crispEdges"/><g fill="#000" opacity="0.55"><circle cx="3.5" cy="3.5" r="1.1"/><circle cx="8.5" cy="3.5" r="1.1"/><circle cx="13.5" cy="3.5" r="1.1"/><circle cx="3.5" cy="7.5" r="1.1"/><circle cx="8.5" cy="7.5" r="1.1"/><circle cx="13.5" cy="7.5" r="1.1"/><circle cx="3.5" cy="11.5" r="1.1"/><circle cx="8.5" cy="11.5" r="1.1"/><circle cx="13.5" cy="11.5" r="1.1"/></g></svg>
<svg class="a" style="left:476px;top:84px" width="5" height="3" viewBox="0 0 5 3"><path d="M0 0H5L2.5 3Z" fill="#6b6f76"/></svg>
<svg class="a" style="left:494px;top:78px" width="17" height="16" viewBox="0 0 17 16"><path d="M4.5 12.5V1.6M4.5 12.5H15.4" stroke="#000" stroke-width="1.3" fill="none"/><path d="M2.2 4.6L4.5 1.4L6.8 4.6M12.4 10.2L15.6 12.5L12.4 14.8" fill="none" stroke="#000" stroke-width="1.2"/><rect x="3" y="11" width="3" height="3" fill="#fff" stroke="#0000ff" stroke-width="1.2"/></svg>
<svg class="a" style="left:525px;top:79px" width="14" height="13" viewBox="0 0 14 13"><path d="M1.9 11.5H7.5V1.25H12.9" fill="none" stroke="#111" stroke-width="1.4"/></svg>
<svg class="a" style="left:546px;top:77px" width="18" height="18" viewBox="0 0 18 18"><path d="M1.0000000000000004 4.5H7.800000000000001M4.4 1.1V7.9" stroke="#000" stroke-width="1.25"/><circle cx="4.4" cy="4.5" r="1.5" fill="#fff" stroke="#000" stroke-width="1.15"/><path d="M10.0 12.3H16.8M13.4 8.9V15.700000000000001" stroke="#000" stroke-width="1.25"/><circle cx="13.4" cy="12.3" r="1.5" fill="#fff" stroke="#000" stroke-width="1.15"/><path d="M2.5 11.5L15.6 5.4" stroke="#111" stroke-width="1.1"/><circle cx="2.8" cy="11.4" r="1.4" fill="#fff" stroke="#1a2ff0" stroke-width="1.1"/><circle cx="15.3" cy="5.5" r="1.4" fill="#fff" stroke="#1a2ff0" stroke-width="1.1"/></svg>
<svg class="a" style="left:577px;top:78px" width="17" height="17" viewBox="0 0 17 17"><path d="M1.2 1.3L3.5 4.6L5.9 1.3M3.5 4.6V7.2" fill="none" stroke="#111" stroke-width="1.15"/><path d="M8.1 4.4H14.9M11.5 1.0000000000000004V7.800000000000001" stroke="#000" stroke-width="1.25"/><circle cx="11.5" cy="4.4" r="1.5" fill="#fff" stroke="#000" stroke-width="1.15"/><path d="M10.2 10.4L14 15.7M14 10.4L10.2 15.7" stroke="#111" stroke-width="1.3"/></svg>
<svg class="a" style="left:721px;top:77px" width="18" height="18" viewBox="0 0 18 18"><path d="M10 9L16 2V12Z" fill="#c9ccd0" stroke="#b3b6ba" stroke-width="0.8"/><rect x="1.5" y="6.5" width="11" height="8" rx="1" fill="#f1f1f1" stroke="#bcbfc3" stroke-width="1"/><circle cx="6" cy="11" r="3" fill="none" stroke="#bcbfc3" stroke-width="1"/><circle cx="10" cy="12" r="1.5" fill="none" stroke="#bcbfc3" stroke-width="1"/><path d="M5 17L8 13" stroke="#bcbfc3" stroke-width="1"/></svg>
<svg class="a" style="left:8px;top:110px" width="15" height="15" viewBox="0 0 15 15"><circle cx="4.6" cy="4.4" r="3.3" fill="none" stroke="#111" stroke-width="1.1"/><path d="M9.5 6.3L12.8 13.2H6.3Z" fill="none" stroke="#111" stroke-width="1.1"/></svg>
<svg class="a" style="left:8px;top:127px" width="15" height="14" viewBox="0 0 15 14"><path d="M3.5 10.2L11 4.2" stroke="#111" stroke-width="1"/><path d="M1.7 7.9L5.3 12.5M9.2 1.9L12.8 6.5" stroke="#111" stroke-width="1.2"/><path d="M3.9 9.9L6.65 9.24L5.15 7.36ZM10.6 4.5L9.35 7.04L7.85 5.16Z" fill="#111"/></svg>
<svg class="a" style="left:8px;top:144px" width="15" height="14" viewBox="0 0 15 14"><rect x="1.2" y="1.8" width="3.8" height="3.8" fill="#fff" stroke="#0a1a8a" stroke-width="1.3"/><path d="M3.1 5.6V9" stroke="#0a1a8a" stroke-width="1.2"/><path d="M1 11.2L3.1 8.6L5.2 11.2Z" fill="#0a1a8a"/><path d="M0.5 11.6H13.5" stroke="#111" stroke-width="1.1"/><path d="M7 7.5L9 11L13 3.5" fill="none" stroke="#111" stroke-width="1"/></svg>
<svg class="a" style="left:8px;top:161px" width="15" height="14" viewBox="0 0 15 14"><path d="M1 4.2H13.5M1 8.2H13.5M6.4 1V12M10.6 1V12" stroke="#111" stroke-width="1.6"/><rect x="1" y="2.8" width="2.6" height="2.6" fill="#fff" stroke="#111" stroke-width="1"/><rect x="1" y="6.9" width="2.6" height="2.6" fill="#fff" stroke="#111" stroke-width="1.2"/><rect x="5.1" y="10.4" width="2.6" height="2.6" fill="#fff" stroke="#111" stroke-width="1.2"/><rect x="9.3" y="10.4" width="2.6" height="2.6" fill="#fff" stroke="#111" stroke-width="1.2"/></svg>
<svg class="a" style="left:8px;top:178px" width="15" height="14" viewBox="0 0 15 14"><path d="M1.5 12L8.5 5.5" stroke="#c07a10" stroke-width="2.6"/><path d="M2 12.8L8.8 6.5" stroke="#7a4a05" stroke-width="0.8"/><path d="M5.5 3.2L8 0.8L13.2 6.2L11.6 8.4L9.4 6.4L8 7.6Z" fill="#d9dde2" stroke="#222" stroke-width="0.9"/></svg>
<svg class="a" style="left:8px;top:195px" width="15" height="14" viewBox="0 0 15 14"><path d="M1.2 5.8L6.8 1.5M3 8.3L9.8 3.3" stroke="#111" stroke-width="1.1"/><path d="M9.8 7.6V12.3M5.5 12.3H13.5" stroke="#111" stroke-width="1.2"/></svg>
<svg class="a" style="left:8px;top:212px" width="15" height="14" viewBox="0 0 15 14"><circle cx="7.2" cy="2.4" r="1.5" fill="#fff" stroke="#111" stroke-width="1"/><path d="M6.6 3.6L1.2 12.8M7.8 3.6L13.2 12.8M4.2 9.5L7.2 5.5L10.2 9.5" fill="none" stroke="#111" stroke-width="1.2"/></svg>
<svg class="a" style="left:8px;top:229px" width="15" height="14" viewBox="0 0 15 14"><path d="M11 1.5L4.5 12.5" stroke="#111" stroke-width="1.3"/><path d="M1 4.2H7M4 1.2V7.2" stroke="#10a020" stroke-width="1.8"/><path d="M8 10H13.5" stroke="#e81020" stroke-width="1.8"/></svg>
<svg class="a" style="left:8px;top:247px" width="15" height="12" viewBox="0 0 15 12"><rect x="1.2" y="1.2" width="12" height="9.2" fill="#fff" stroke="#111" stroke-width="1.3"/><rect x="3.6" y="3.2" width="4.6" height="2.2" fill="#fff" stroke="#1a2ff0" stroke-width="1"/><path d="M8.4 7.4H13M8.4 7.4V10M10.8 7.4V10" stroke="#111" stroke-width="1"/></svg>
<svg class="a" style="left:9px;top:264px" width="13" height="13" viewBox="0 0 13 13"><path d="M1.2 0.8H7.5L10.8 4V11.8H1.2Z" fill="#fff" stroke="#111" stroke-width="1.2"/><path d="M1.2 3.5H9M1.2 6H10.8M1.2 8.5H10.8M3.6 1V11.8M6 1V11.8M8.4 3.5V11.8" stroke="#111" stroke-width="0.7"/><path d="M1.2 10.6H10.8" stroke="#111" stroke-width="1.4"/></svg>
<svg class="a" style="left:8px;top:280px" width="15" height="14" viewBox="0 0 15 14"><defs><linearGradient id="nbg" x1="0" y1="0" x2="0" y2="1"><stop offset="0" stop-color="#dfe8ff"/><stop offset="1" stop-color="#3a6af0"/></linearGradient></defs><rect x="3.2" y="1" width="10" height="11.6" fill="url(#nbg)" stroke="#0a1a8a" stroke-width="1.3"/><rect x="5.5" y="3" width="5.5" height="3" fill="#f4f7ff"/><path d="M1.8 1V12.6" stroke="#222" stroke-width="1.6" stroke-dasharray="1 1"/></svg>
<svg class="a" style="left:8px;top:297px" width="15" height="13" viewBox="0 0 15 13"><path d="M1.2 8.5L4.2 4.2H10.5V9.5L8.8 11.5H2Q1.2 10.5 1.2 8.5Z" fill="#fff" stroke="#1a2ff0" stroke-width="1.2"/><path d="M4.2 4.2L7 1.5H13.2V7.5L10.5 9.5M10.5 4.2L13.2 1.5" fill="none" stroke="#1a2ff0" stroke-width="1.2"/><circle cx="6" cy="7.8" r="1.5" fill="none" stroke="#1a2ff0" stroke-width="1.1"/></svg>
<svg class="a" style="left:9px;top:330px" width="5" height="5" viewBox="0 0 5 5"><circle cx="2.4" cy="2.5" r="1.3" fill="#fff" stroke="#111" stroke-width="1.2"/></svg>
<svg class="a" style="left:17px;top:336px" width="5" height="5" viewBox="0 0 5 5"><path d="M5 0V5H0Z" fill="#6b6f76"/></svg>
<svg class="a" style="left:2px;top:349px" width="18" height="11" viewBox="0 0 18 11"><path d="M1 8.7L16.2 2" stroke="#111" stroke-width="1"/><rect x="7.5" y="4.5" width="2" height="2" fill="#fff" stroke="#1a2ff0" stroke-width="1" shape-rendering="crispEdges"/></svg>
<svg class="a" style="left:17px;top:358px" width="5" height="5" viewBox="0 0 5 5"><path d="M5 0V5H0Z" fill="#6b6f76"/></svg>
<svg class="a" style="left:3px;top:372px" width="16" height="10" viewBox="0 0 16 10"><path d="M2.6 7.6L13.3 2.6" stroke="#111" stroke-width="1"/><rect x="1.5" y="6.5" width="2" height="2" fill="#fff" stroke="#1a2ff0" stroke-width="1" shape-rendering="crispEdges"/><rect x="12.5" y="1.5" width="2" height="2" fill="#fff" stroke="#1a2ff0" stroke-width="1" shape-rendering="crispEdges"/></svg>
<svg class="a" style="left:17px;top:380px" width="5" height="5" viewBox="0 0 5 5"><path d="M5 0V5H0Z" fill="#6b6f76"/></svg>
<svg class="a" style="left:3px;top:390px" width="16" height="15" viewBox="0 0 16 15"><circle cx="7.3" cy="7.6" r="6" fill="none" stroke="#111" stroke-width="1.1"/><rect x="6.5" y="6.5" width="2" height="2" fill="#fff" stroke="#1a2ff0" stroke-width="1" shape-rendering="crispEdges"/><rect x="10.5" y="10.5" width="2" height="2" fill="#fff" stroke="#1a2ff0" stroke-width="1" shape-rendering="crispEdges"/></svg>
<svg class="a" style="left:17px;top:402px" width="5" height="5" viewBox="0 0 5 5"><path d="M5 0V5H0Z" fill="#6b6f76"/></svg>
<svg class="a" style="left:3px;top:413px" width="16" height="14" viewBox="0 0 16 14"><path d="M2.3 11.2Q2.3 2.5 9 2.3Q12 2.5 13.3 5.5" fill="none" stroke="#111" stroke-width="1.1"/><rect x="1.5" y="10.5" width="2" height="2" fill="#fff" stroke="#1a2ff0" stroke-width="1" shape-rendering="crispEdges"/><rect x="8.5" y="9.5" width="2" height="2" fill="#fff" stroke="#1a2ff0" stroke-width="1" shape-rendering="crispEdges"/><rect x="12.5" y="4.5" width="2" height="2" fill="#fff" stroke="#1a2ff0" stroke-width="1" shape-rendering="crispEdges"/></svg>
<svg class="a" style="left:17px;top:424px" width="5" height="5" viewBox="0 0 5 5"><path d="M5 0V5H0Z" fill="#6b6f76"/></svg>
<svg class="a" style="left:2px;top:435px" width="18" height="14" viewBox="0 0 18 14"><ellipse cx="8.7" cy="7.5" rx="7.4" ry="5.2" fill="none" stroke="#111" stroke-width="1.1"/><rect x="7.5" y="1.5" width="2" height="2" fill="#fff" stroke="#1a2ff0" stroke-width="1" shape-rendering="crispEdges"/><rect x="7.5" y="6.5" width="2" height="2" fill="#fff" stroke="#1a2ff0" stroke-width="1" shape-rendering="crispEdges"/><rect x="14.5" y="6.5" width="2" height="2" fill="#fff" stroke="#1a2ff0" stroke-width="1" shape-rendering="crispEdges"/></svg>
<svg class="a" style="left:17px;top:446px" width="5" height="5" viewBox="0 0 5 5"><path d="M5 0V5H0Z" fill="#6b6f76"/></svg>
<svg class="a" style="left:3px;top:454px" width="18" height="19" viewBox="0 0 18 19"><path d="M3.4 15.5V5.5Q3.6 2.2 6.4 2.4Q9.2 2.6 9.4 6V12Q9.6 16 12.6 15.8Q15.6 15.6 15.6 12.5V3.5" fill="none" stroke="#111" stroke-width="1.1"/><rect x="2.5" y="5.5" width="2" height="2" fill="#fff" stroke="#1a2ff0" stroke-width="1" shape-rendering="crispEdges"/><rect x="2.5" y="14.5" width="2" height="2" fill="#fff" stroke="#1a2ff0" stroke-width="1" shape-rendering="crispEdges"/><rect x="8.5" y="5.5" width="2" height="2" fill="#fff" stroke="#1a2ff0" stroke-width="1" shape-rendering="crispEdges"/><rect x="8.5" y="11.5" width="2" height="2" fill="#fff" stroke="#1a2ff0" stroke-width="1" shape-rendering="crispEdges"/><rect x="14.5" y="2.5" width="2" height="2" fill="#fff" stroke="#1a2ff0" stroke-width="1" shape-rendering="crispEdges"/><rect x="14.5" y="11.5" width="2" height="2" fill="#fff" stroke="#1a2ff0" stroke-width="1" shape-rendering="crispEdges"/></svg>
<svg class="a" style="left:3px;top:476px" width="19" height="20" viewBox="0 0 19 20"><path d="M4.4 16V7.5Q4.6 4.2 7.4 4.4Q10.2 4.6 10.4 8V13Q10.6 17 13.6 16.8Q16.6 16.6 16.6 13.5V4.5" fill="none" stroke="#111" stroke-width="1.1"/><rect x="3.5" y="6.5" width="2" height="2" fill="#fff" stroke="#1a2ff0" stroke-width="1" shape-rendering="crispEdges"/><rect x="3.5" y="14.5" width="2" height="2" fill="#fff" stroke="#1a2ff0" stroke-width="1" shape-rendering="crispEdges"/><rect x="9.5" y="12.5" width="2" height="2" fill="#fff" stroke="#1a2ff0" stroke-width="1" shape-rendering="crispEdges"/><rect x="15.5" y="3.5" width="2" height="2" fill="#fff" stroke="#1a2ff0" stroke-width="1" shape-rendering="crispEdges"/><rect x="15.5" y="12.5" width="2" height="2" fill="#fff" stroke="#1a2ff0" stroke-width="1" shape-rendering="crispEdges"/><path d="M9.5 2.5L15 1.8L11.6 7H14.6L5.5 14.5L8.8 8.2H6.6Z" fill="#f2e21a" stroke="#c8a800" stroke-width="0.5"/></svg>
<svg class="a" style="left:3px;top:498px" width="19" height="20" viewBox="0 0 19 20"><path d="M1.8 2.6H8.5Q12 2.6 12 6V10Q12 11.2 13.2 11.2H18" fill="none" stroke="#111" stroke-width="1.2"/><path d="M1.8 7.8H6Q7 7.8 7 9V12Q7 16.8 11.5 16.8H18" fill="none" stroke="#111" stroke-width="1.2"/><path d="M3 5.2H8.5Q9.6 5.4 9.6 7V11.5Q9.8 14 12.5 14H16.5" fill="none" stroke="#8a8a8a" stroke-width="0.9"/><rect x="2.5" y="4.5" width="2" height="2" fill="#fff" stroke="#1a2ff0" stroke-width="1" shape-rendering="crispEdges"/><rect x="8.5" y="4.5" width="2" height="2" fill="#fff" stroke="#1a2ff0" stroke-width="1" shape-rendering="crispEdges"/><rect x="8.5" y="12.5" width="2" height="2" fill="#fff" stroke="#1a2ff0" stroke-width="1" shape-rendering="crispEdges"/><rect x="15.5" y="12.5" width="2" height="2" fill="#fff" stroke="#1a2ff0" stroke-width="1" shape-rendering="crispEdges"/></svg>
<svg class="a" style="left:2px;top:522px" width="19" height="15" viewBox="0 0 19 15"><path d="M2.4 12.5Q3.5 6 6.4 6.2Q9 6.6 11.4 9.4Q14.5 9.2 15.6 4" fill="none" stroke="#111" stroke-width="1.1"/><rect x="1.5" y="11.5" width="2" height="2" fill="#fff" stroke="#1a2ff0" stroke-width="1" shape-rendering="crispEdges"/><rect x="5.5" y="5.5" width="2" height="2" fill="#fff" stroke="#1a2ff0" stroke-width="1" shape-rendering="crispEdges"/><rect x="10.5" y="8.5" width="2" height="2" fill="#fff" stroke="#1a2ff0" stroke-width="1" shape-rendering="crispEdges"/><rect x="14.5" y="2.5" width="2" height="2" fill="#fff" stroke="#1a2ff0" stroke-width="1" shape-rendering="crispEdges"/></svg>
<svg class="a" style="left:17px;top:534px" width="5" height="5" viewBox="0 0 5 5"><path d="M5 0V5H0Z" fill="#6b6f76"/></svg>
<svg class="a" style="left:3px;top:543px" width="18" height="18" viewBox="0 0 18 18"><path d="M1.4 2.3H6.4L14.6 10.8V15.8" fill="none" stroke="#111" stroke-width="1.6"/><path d="M6.4 2.3H15.2V10.8" fill="none" stroke="#111" stroke-width="1" stroke-dasharray="1 1"/><path d="M18 12V17H13Z" fill="#6b6f76"/></svg>
<svg class="a" style="left:3px;top:565px" width="18" height="18" viewBox="0 0 18 18"><path d="M1.4 2.3H5Q14.6 3 14.6 12V15.8" fill="none" stroke="#111" stroke-width="1.6"/><path d="M6.4 2.3H15.2V10.8" fill="none" stroke="#111" stroke-width="1" stroke-dasharray="1 1"/><path d="M18 12V17H13Z" fill="#6b6f76"/></svg>
<svg class="a" style="left:2px;top:589px" width="19" height="15" viewBox="0 0 19 15"><rect x="2.4" y="2.5" width="13.2" height="9.4" fill="none" stroke="#111" stroke-width="1.2"/><rect x="14.5" y="1.5" width="2" height="2" fill="#fff" stroke="#1a2ff0" stroke-width="1" shape-rendering="crispEdges"/><rect x="1.5" y="10.5" width="2" height="2" fill="#fff" stroke="#1a2ff0" stroke-width="1" shape-rendering="crispEdges"/></svg>
<svg class="a" style="left:17px;top:601px" width="5" height="5" viewBox="0 0 5 5"><path d="M5 0V5H0Z" fill="#6b6f76"/></svg>
<svg class="a" style="left:4px;top:609px" width="18" height="17" viewBox="0 0 18 17"><circle cx="8.2" cy="9.6" r="5.4" fill="none" stroke="#111" stroke-width="1.1"/><rect x="8.4" y="1.6" width="8" height="10.6" fill="none" stroke="#111" stroke-width="1.2"/><path d="M3 4.4H8.5" stroke="#10d020" stroke-width="1.4"/><path d="M0.5 4.4L4 2V6.8Z" fill="#10d020"/></svg>
<svg class="a" style="left:2px;top:631px" width="19" height="17" viewBox="0 0 19 17"><path d="M1.6 10.5L11 1.5M6.2 15.8L15.6 6.5" stroke="#111" stroke-width="1.1"/><path d="M3.6 13.4L13.6 3.6" stroke="#1a2ff0" stroke-width="1.1"/></svg>
<svg class="a" style="left:17px;top:643px" width="5" height="5" viewBox="0 0 5 5"><path d="M5 0V5H0Z" fill="#6b6f76"/></svg>
<svg class="a" style="left:3px;top:654px" width="19" height="17" viewBox="0 0 19 17"><defs><pattern id="ht" width="3" height="3" patternUnits="userSpaceOnUse" patternTransform="rotate(45)"><rect width="3" height="3" fill="#fff"/><rect width="3" height="1.6" fill="#1a2ff0"/></pattern></defs><path d="M1.6 1.4H9.4V5H14.4V14.4H6.4V10H1.6Z" fill="url(#ht)" stroke="#000" stroke-width="1.5"/><path d="M18 11.5V16.5H13Z" fill="#6b6f76"/></svg>
<svg class="a" style="left:4px;top:674px" width="19" height="19" viewBox="0 0 19 19"><path d="M13 6.5L17.5 2" stroke="#0a1a8a" stroke-width="2.6"/><path d="M9.5 6.5L12.5 4.2L15 7L12.8 9.6Z" fill="#7ec8f0" stroke="#2a5a9a" stroke-width="0.7"/><path d="M6 9.5L9.5 6.5L12.8 9.6L9.2 13Z" fill="#f1e36b" stroke="#555" stroke-width="0.7"/><path d="M1.5 12.5L6 9.5L9.2 13L6.5 17.5Z" fill="#f4f4f4" stroke="#777" stroke-width="0.7"/><path d="M3 12.8L7.2 16.2M4.4 11.6L8.2 15M2.4 13.8L6.6 17" stroke="#999" stroke-width="0.6"/><path d="M4.6 0.5V9.5M0.2 5H9M1.6 2L7.6 8M7.6 2L1.6 8" stroke="#f2d21a" stroke-width="1"/><circle cx="4.6" cy="5" r="2.3" fill="#f0281a" stroke="#f2a21a" stroke-width="0.9"/></svg>
<svg class="a" style="left:4px;top:705px" width="19" height="18" viewBox="0 0 19 18"><path d="M5 1.5H14" stroke="#c3c5c9" stroke-width="1"/><path d="M5.5 2V8.5M13.5 2V8.5" stroke="#c3c5c9" stroke-width="1" stroke-dasharray="1 1"/><path d="M9.5 3V9M7.3 7L9.5 9.5L11.7 7" fill="none" stroke="#a9acb1" stroke-width="1.1"/><path d="M4.5 11H17L14 16.5H1.5Z" fill="#f0f0f0" stroke="#c3c5c9" stroke-width="1"/><path d="M6 13Q9 12.5 10 14Q12 14.8 13.5 13.5" fill="none" stroke="#bbbdc2" stroke-width="0.9"/></svg>
<svg class="a" id="drawing" style="left:0;top:0" width="1600" height="860" viewBox="0 0 1600 860" shape-rendering="crispEdges">
<rect x="589" y="132" width="447" height="1" fill="#000"/><rect x="1035" y="132" width="1" height="631" fill="#000"/><rect x="626" y="762" width="410" height="1" fill="#000"/><rect x="589" y="132" width="1" height="587" fill="#000"/><rect x="589" y="719" width="1" height="44" fill="#8a8a8a"/><rect x="589" y="762" width="37" height="1" fill="#8a8a8a"/><rect x="658" y="191" width="308" height="1" fill="#c8c8c8"/><rect x="658" y="631" width="308" height="1" fill="#c8c8c8"/><rect x="658" y="191" width="1" height="441" fill="#c8c8c8"/><rect x="965" y="191" width="1" height="441" fill="#c8c8c8"/>
<rect x="606" y="142" width="420" height="2" fill="#0000ff"/><rect x="606" y="751" width="420" height="2" fill="#0000ff"/><rect x="1024" y="142" width="2" height="611" fill="#0000ff"/><rect x="606" y="142" width="2" height="257" fill="#0000ff"/><rect x="606" y="443" width="2" height="310" fill="#0000ff"/><rect x="631" y="142" width="2" height="611" fill="#0000ff"/><rect x="617" y="142" width="2" height="257" fill="#0000ff"/><rect x="617" y="443" width="2" height="310" fill="#0000ff"/><rect x="780" y="142" width="2" height="32" fill="#0000ff"/><rect x="631" y="172" width="151" height="2" fill="#0000ff"/><rect x="606" y="268" width="27" height="2" fill="#0000ff"/><rect x="606" y="397" width="27" height="2" fill="#0000ff"/><rect x="606" y="443" width="27" height="2" fill="#0000ff"/><rect x="606" y="518" width="27" height="2" fill="#0000ff"/><rect x="606" y="571" width="27" height="2" fill="#0000ff"/><rect x="606" y="624" width="27" height="2" fill="#0000ff"/><rect x="606" y="698" width="27" height="2" fill="#0000ff"/><rect x="631" y="634" width="395" height="2" fill="#0000ff"/>
<rect x="662" y="195" width="2" height="433" fill="#0000ff"/><rect x="662" y="195" width="275" height="2" fill="#0000ff"/><rect x="935" y="195" width="2" height="375" fill="#0000ff"/><rect x="662" y="626" width="250" height="2" fill="#0000ff"/><rect x="685" y="204" width="2" height="405" fill="#0000ff"/><rect x="685" y="204" width="227" height="2" fill="#0000ff"/><rect x="910" y="204" width="2" height="345" fill="#0000ff"/><rect x="685" y="607" width="227" height="2" fill="#0000ff"/><rect x="910" y="607" width="2" height="21" fill="#0000ff"/>
<rect x="695" y="240" width="27" height="2" fill="#0000ff"/><rect x="695" y="263" width="27" height="2" fill="#0000ff"/><rect x="695" y="240" width="2" height="25" fill="#0000ff"/><rect x="720" y="240" width="2" height="25" fill="#0000ff"/><rect x="695" y="277" width="27" height="2" fill="#0000ff"/><rect x="695" y="301" width="27" height="2" fill="#0000ff"/><rect x="695" y="277" width="2" height="26" fill="#0000ff"/><rect x="720" y="277" width="2" height="26" fill="#0000ff"/><rect x="695" y="316" width="26" height="2" fill="#0000ff"/><rect x="695" y="338" width="26" height="2" fill="#0000ff"/><rect x="695" y="316" width="2" height="24" fill="#0000ff"/><rect x="719" y="316" width="2" height="24" fill="#0000ff"/><rect x="695" y="353" width="27" height="2" fill="#0000ff"/><rect x="695" y="376" width="27" height="2" fill="#0000ff"/><rect x="695" y="353" width="2" height="25" fill="#0000ff"/><rect x="720" y="353" width="2" height="25" fill="#0000ff"/><rect x="695" y="397" width="27" height="2" fill="#0000ff"/><rect x="695" y="421" width="27" height="2" fill="#0000ff"/><rect x="695" y="397" width="2" height="26" fill="#0000ff"/><rect x="720" y="397" width="2" height="26" fill="#0000ff"/><rect x="695" y="437" width="27" height="2" fill="#0000ff"/><rect x="695" y="460" width="27" height="2" fill="#0000ff"/><rect x="695" y="437" width="2" height="25" fill="#0000ff"/><rect x="720" y="437" width="2" height="25" fill="#0000ff"/><rect x="695" y="483" width="27" height="2" fill="#0000ff"/><rect x="695" y="506" width="27" height="2" fill="#0000ff"/><rect x="695" y="483" width="2" height="25" fill="#0000ff"/><rect x="720" y="483" width="2" height="25" fill="#0000ff"/><rect x="695" y="524" width="27" height="2" fill="#0000ff"/><rect x="695" y="547" width="27" height="2" fill="#0000ff"/><rect x="695" y="524" width="2" height="25" fill="#0000ff"/><rect x="720" y="524" width="2" height="25" fill="#0000ff"/><rect x="869" y="240" width="26" height="2" fill="#0000ff"/><rect x="869" y="263" width="26" height="2" fill="#0000ff"/><rect x="869" y="240" width="2" height="25" fill="#0000ff"/><rect x="893" y="240" width="2" height="25" fill="#0000ff"/><rect x="685" y="253" width="12" height="2" fill="#0000ff"/><rect x="662" y="286" width="35" height="2" fill="#0000ff"/><rect x="685" y="328" width="12" height="2" fill="#0000ff"/><rect x="685" y="365" width="12" height="2" fill="#0000ff"/><rect x="662" y="376" width="25" height="2" fill="#0000ff"/><rect x="685" y="413" width="12" height="2" fill="#0000ff"/><rect x="685" y="450" width="12" height="2" fill="#0000ff"/><rect x="662" y="499" width="35" height="2" fill="#0000ff"/><rect x="685" y="538" width="12" height="2" fill="#0000ff"/><rect x="893" y="253" width="19" height="2" fill="#0000ff"/>
<rect x="725" y="245" width="70" height="2" fill="#0000ff"/><rect x="725" y="296" width="70" height="2" fill="#0000ff"/><rect x="725" y="245" width="2" height="53" fill="#0000ff"/><rect x="793" y="245" width="2" height="53" fill="#0000ff"/><rect x="798" y="244" width="69" height="2" fill="#0000ff"/><rect x="798" y="294" width="69" height="2" fill="#0000ff"/><rect x="798" y="244" width="2" height="52" fill="#0000ff"/><rect x="865" y="244" width="2" height="52" fill="#0000ff"/><rect x="726" y="323" width="70" height="2" fill="#0000ff"/><rect x="726" y="374" width="70" height="2" fill="#0000ff"/><rect x="726" y="323" width="2" height="53" fill="#0000ff"/><rect x="794" y="323" width="2" height="53" fill="#0000ff"/><rect x="725" y="402" width="70" height="2" fill="#0000ff"/><rect x="725" y="453" width="70" height="2" fill="#0000ff"/><rect x="725" y="402" width="2" height="53" fill="#0000ff"/><rect x="793" y="402" width="2" height="53" fill="#0000ff"/><rect x="727" y="489" width="70" height="2" fill="#0000ff"/><rect x="727" y="540" width="70" height="2" fill="#0000ff"/><rect x="727" y="489" width="2" height="53" fill="#0000ff"/><rect x="795" y="489" width="2" height="53" fill="#0000ff"/><rect x="695" y="557" width="104" height="2" fill="#0000ff"/><rect x="695" y="600" width="104" height="2" fill="#0000ff"/><rect x="695" y="557" width="2" height="45" fill="#0000ff"/><rect x="797" y="557" width="2" height="45" fill="#0000ff"/>
<rect x="646" y="634" width="2" height="54" fill="#0000ff"/><rect x="668" y="634" width="2" height="119" fill="#0000ff"/><rect x="716" y="634" width="2" height="119" fill="#0000ff"/><rect x="748" y="634" width="2" height="119" fill="#0000ff"/><rect x="769" y="634" width="2" height="119" fill="#0000ff"/><rect x="918" y="666" width="2" height="87" fill="#0000ff"/><rect x="950" y="666" width="2" height="45" fill="#0000ff"/><rect x="986" y="666" width="2" height="45" fill="#0000ff"/><rect x="962" y="709" width="2" height="12" fill="#0000ff"/><rect x="631" y="677" width="140" height="2" fill="#0000ff"/><rect x="631" y="687" width="140" height="2" fill="#0000ff"/><rect x="769" y="666" width="257" height="2" fill="#0000ff"/><rect x="918" y="677" width="108" height="2" fill="#0000ff"/><rect x="918" y="709" width="108" height="2" fill="#0000ff"/><rect x="769" y="719" width="257" height="2" fill="#0000ff"/><rect x="633" y="646" width="137" height="1" fill="#000"/><rect x="633" y="656" width="137" height="1" fill="#000"/><rect x="633" y="667" width="137" height="1" fill="#000"/><rect x="633" y="699" width="137" height="1" fill="#000"/><rect x="633" y="709" width="137" height="1" fill="#000"/><rect x="633" y="720" width="137" height="1" fill="#000"/><rect x="633" y="730" width="137" height="1" fill="#000"/><rect x="633" y="741" width="137" height="1" fill="#000"/><rect x="929" y="678" width="1" height="32" fill="#000"/><rect x="940" y="678" width="1" height="32" fill="#000"/>
</svg>
<svg class="a" id="drawtext" style="left:0;top:0" width="1600" height="860" viewBox="0 0 1600 860">
<path d="M911 548.3L962 590.3" stroke="#0000ff" stroke-width="1.7" fill="none"/>
<g stroke="#8a8a8a" stroke-width="1" fill="none"><path d="M589.5 718.5L591.5 722.5M593.8 718.5L590 726.5"/><path d="M587.5 736.5H592.5L590 731.5Z" fill="#fff"/><path d="M625 754.5L630 761.5M630 754.5L625 761.5"/><path d="M616.5 760.5V765.5L624 762.8Z" fill="#fff"/></g>
<g font-family="Liberation Sans, sans-serif" font-style="italic">
<text x="698" y="253.8" font-size="14" textLength="21" lengthAdjust="spacingAndGlyphs" fill="#111">пк2</text>
<text x="699.2" y="290.2" font-size="14" textLength="20.5" lengthAdjust="spacingAndGlyphs" fill="#111">пк3</text>
<text x="699.9" y="331.6" font-size="14" textLength="20" lengthAdjust="spacingAndGlyphs" fill="#111">пк4</text>
<text x="699.2" y="364.8" font-size="14" textLength="20.5" lengthAdjust="spacingAndGlyphs" fill="#111">пк5</text>
<text x="700" y="411.5" font-size="14" textLength="20" lengthAdjust="spacingAndGlyphs" fill="#111">пк6</text>
<text x="700.5" y="451" font-size="14" textLength="20" lengthAdjust="spacingAndGlyphs" fill="#111">пк7</text>
<text x="699.9" y="498.9" font-size="14" textLength="20" lengthAdjust="spacingAndGlyphs" fill="#111">пк8</text>
<text x="700.5" y="538.8" font-size="14" textLength="20" lengthAdjust="spacingAndGlyphs" fill="#111">пк9</text>
<text x="871.7" y="252" font-size="14" textLength="26.5" lengthAdjust="spacingAndGlyphs" fill="#111">пк10</text>
<text x="747" y="278" font-size="14" textLength="10" lengthAdjust="spacingAndGlyphs" fill="#111">П</text>
<text x="823" y="278" font-size="14" textLength="10" lengthAdjust="spacingAndGlyphs" fill="#111">П</text>
<text x="747" y="353.8" font-size="14" textLength="10" lengthAdjust="spacingAndGlyphs" fill="#111">П</text>
<text x="747" y="437.9" font-size="14" textLength="10" lengthAdjust="spacingAndGlyphs" fill="#111">П</text>
<text x="747" y="515.9" font-size="14" textLength="10" lengthAdjust="spacingAndGlyphs" fill="#111">П</text>
<text x="696.5" y="579" font-size="14" textLength="82" lengthAdjust="spacingAndGlyphs" fill="#111">коммутатор</text>
<text x="995" y="699" font-size="14" textLength="18" lengthAdjust="spacingAndGlyphs" fill="#111">1:1</text>
<text x="633.5" y="686" font-size="9" textLength="11" lengthAdjust="spacingAndGlyphs" fill="#2a2a2a" opacity="0.8">Изм</text>
<text x="649" y="686" font-size="9" textLength="18" lengthAdjust="spacingAndGlyphs" fill="#2a2a2a" opacity="0.8">Лист</text>
<text x="672" y="686" font-size="9" textLength="41" lengthAdjust="spacingAndGlyphs" fill="#2a2a2a" opacity="0.8">№ докум.</text>
<text x="721" y="686" font-size="9" textLength="22" lengthAdjust="spacingAndGlyphs" fill="#2a2a2a" opacity="0.8">Подп.</text>
<text x="751" y="686" font-size="9" textLength="17" lengthAdjust="spacingAndGlyphs" fill="#2a2a2a" opacity="0.8">Дата</text>
<text x="634" y="698" font-size="9" textLength="33" lengthAdjust="spacingAndGlyphs" fill="#2a2a2a" opacity="0.8">Разраб.</text>
<text x="634" y="708.3" font-size="9" textLength="21" lengthAdjust="spacingAndGlyphs" fill="#2a2a2a" opacity="0.8">Пров.</text>
<text x="634" y="719" font-size="9" textLength="31" lengthAdjust="spacingAndGlyphs" fill="#2a2a2a" opacity="0.8">Т.контр.</text>
<text x="634" y="740" font-size="9" textLength="31" lengthAdjust="spacingAndGlyphs" fill="#2a2a2a" opacity="0.8">Н.контр.</text>
<text x="634" y="750.3" font-size="9" textLength="16" lengthAdjust="spacingAndGlyphs" fill="#2a2a2a" opacity="0.8">Утв.</text>
<text x="925" y="675.5" font-size="9" textLength="17" lengthAdjust="spacingAndGlyphs" fill="#2a2a2a" opacity="0.8">Лит.</text>
<text x="953.5" y="675.5" font-size="9" textLength="28" lengthAdjust="spacingAndGlyphs" fill="#2a2a2a" opacity="0.8">Масса</text>
<text x="988" y="675.5" font-size="9" textLength="34" lengthAdjust="spacingAndGlyphs" fill="#2a2a2a" opacity="0.8">Масштаб</text>
<text x="920.5" y="718.3" font-size="9" textLength="21" lengthAdjust="spacingAndGlyphs" fill="#2a2a2a" opacity="0.8">Лист</text>
<text x="964.5" y="718.3" font-size="9" textLength="31" lengthAdjust="spacingAndGlyphs" fill="#2a2a2a" opacity="0.8">Листов</text>
<text x="793" y="761" font-size="9" textLength="45" lengthAdjust="spacingAndGlyphs" fill="#2a2a2a" opacity="0.8">Копировал</text>
<text x="942" y="761" font-size="9" textLength="52.5" lengthAdjust="spacingAndGlyphs" fill="#2a2a2a" opacity="0.8">Формат  А4</text>
<text transform="translate(616,237) rotate(-90)" font-size="9" textLength="60" lengthAdjust="spacingAndGlyphs" fill="#2a2a2a" opacity="0.8">Перв. примен.</text>
<text transform="translate(616,356) rotate(-90)" font-size="9" textLength="40" lengthAdjust="spacingAndGlyphs" fill="#2a2a2a" opacity="0.8">Справ. №</text>
<text transform="translate(616,512) rotate(-90)" font-size="9" textLength="58" lengthAdjust="spacingAndGlyphs" fill="#2a2a2a" opacity="0.8">Подп. и дата</text>
<text transform="translate(616,570.5) rotate(-90)" font-size="9" textLength="50.0" lengthAdjust="spacingAndGlyphs" fill="#2a2a2a" opacity="0.8">Инв. № дубл.</text>
<text transform="translate(616,623.5) rotate(-90)" font-size="9" textLength="48.5" lengthAdjust="spacingAndGlyphs" fill="#2a2a2a" opacity="0.8">Взам. инв. №</text>
<text transform="translate(616,692) rotate(-90)" font-size="9" textLength="57.299999999999955" lengthAdjust="spacingAndGlyphs" fill="#2a2a2a" opacity="0.8">Подп. и дата</text>
<text transform="translate(616,749.5) rotate(-90)" font-size="9" textLength="48.5" lengthAdjust="spacingAndGlyphs" fill="#2a2a2a" opacity="0.8">Инв. № подл.</text>
</g>
</svg>
<svg class="a" style="left:0;top:860px" width="1600" height="40" viewBox="0 0 1600 40">
<defs><filter id="water" x="0" y="0" width="100%" height="100%" color-interpolation-filters="sRGB">
<feTurbulence type="turbulence" baseFrequency="0.016 0.032" numOctaves="3" seed="11" result="n"/>
<feColorMatrix in="n" type="matrix" values="-0.42 0 0 0 0.475  -0.30 0 0 0 0.725  -0.27 0 0 0 0.775  0 0 0 0 1"/>
</filter>
<linearGradient id="tbedge" x1="0" y1="0" x2="0" y2="1"><stop offset="0" stop-color="#1d6a78" stop-opacity="0.7"/><stop offset="0.05" stop-color="#1d6a78" stop-opacity="0"/><stop offset="0.92" stop-color="#1d6a78" stop-opacity="0"/><stop offset="1" stop-color="#1d6a78" stop-opacity="0.6"/></linearGradient></defs>
<rect width="1600" height="40" fill="#4f97a6"/>
<rect width="1600" height="40" filter="url(#water)"/>
<rect width="1600" height="40" fill="url(#tbedge)"/>
</svg>
<div class="a tbtn" style="left:106px;width:4px;background:rgba(205,226,230,.30)"></div>
<div class="a tbtn" style="left:52px;width:53px;"></div>
<div class="a tbtn" style="left:230px;width:4px;background:rgba(205,226,230,.30)"></div>
<div class="a tbtn" style="left:176px;width:53px;"></div>
<div class="a tbtn" style="left:238px;width:59px;"></div>
<div class="a tbtn" style="left:300px;width:58px;"></div>
<div class="a tbtn" style="left:362px;width:58px;background:rgba(232,242,244,.55);border-color:rgba(248,253,253,.95);"></div>
<svg class="a" style="left:11px;top:865px" width="28" height="28" viewBox="0 0 28 28"><path d="M1 4.5L12 2.5V13.2H1ZM13.5 2.2L27 0.2V13.2H13.5ZM1 14.8H12V25.5L1 23.5ZM13.5 14.8H27V27.8L13.5 25.8Z" fill="#fff"/></svg>
<svg class="a" style="left:62px;top:866px" width="33" height="31" viewBox="0 0 33 31"><defs><linearGradient id="fg" x1="0" y1="0" x2="0" y2="1"><stop offset="0" stop-color="#fbefae"/><stop offset="1" stop-color="#eccb62"/></linearGradient><linearGradient id="fb" x1="0" y1="0" x2="0" y2="1"><stop offset="0" stop-color="#c9ecfb"/><stop offset="1" stop-color="#3a9ee6"/></linearGradient></defs><path d="M2 3Q2 1.5 3.5 1.5H11L13 3.5H22L24 5.5H30Q31.5 5.5 31.5 7V26H2Z" fill="#f3dc8a" stroke="#d9b64c" stroke-width="1"/><rect x="4" y="2.5" width="3" height="2" fill="#18c038"/><rect x="6.8" y="2.5" width="5" height="2" fill="#fff"/><rect x="12" y="4.5" width="3" height="2" fill="#e0301a"/><rect x="15" y="4.5" width="5" height="2" fill="#fff"/><rect x="20.5" y="6.5" width="3" height="2" fill="#2a8ae8"/><rect x="23.5" y="6.5" width="5" height="2" fill="#fff"/><path d="M1.5 9Q1.5 8 2.5 8H30.5Q31.5 8 31.5 9V26Q31.5 27 30.5 27H2.5Q1.5 27 1.5 26Z" fill="url(#fg)" stroke="#d9b64c" stroke-width="0.8"/><path d="M5.5 29.5V21Q5.5 17.5 9 17.5H24Q27.5 17.5 27.5 21V29.5H21.5V24Q21.5 23 20.5 23H12.5Q11.5 23 11.5 24V29.5Z" fill="url(#fb)" stroke="#2a86d0" stroke-width="1"/><path d="M8.5 12L9.2 18.3L14 19L9.2 19.8L8.5 26L7.8 19.8L3.5 19L7.8 18.3Z" fill="#fff" opacity="0.85"/></svg>
<svg class="a" style="left:128px;top:865px" width="30" height="30" viewBox="0 0 30 30"><circle cx="15" cy="15" r="14.5" fill="#db4437"/><path d="M15 15L2.45 7.75A14.5 14.5 0 0 0 12 29.2L18 19Z" fill="#0f9d58"/><path d="M15 15L21.5 18.5L12 29.2A14.5 14.5 0 0 0 27.55 7.75H15Z" fill="#ffcd40"/><path d="M15 15L2.45 7.75A14.5 14.5 0 0 1 27.55 7.75H15Z" fill="#db4437"/><circle cx="15" cy="15" r="6.8" fill="#f1f1f1"/><circle cx="15" cy="15" r="5.4" fill="#4285f4"/></svg>
<svg class="a" style="left:186px;top:864px" width="32" height="32" viewBox="0 0 32 32"><rect x="13" y="4.5" width="17.5" height="23" fill="#fff" stroke="#2b579a" stroke-width="1"/><path d="M20 9H28M20 12H28M20 15H28M20 18H28M20 21H28M20 24H28" stroke="#2b579a" stroke-width="1.2"/><path d="M1 4.5L19 1V31L1 27.5Z" fill="#2b579a"/><text x="3.6" y="21.5" font-family="Liberation Sans, sans-serif" font-weight="bold" font-size="14" fill="#fff" textLength="13" lengthAdjust="spacingAndGlyphs">W</text></svg>
<svg class="a" style="left:250px;top:864px" width="36" height="32" viewBox="0 0 36 32"><path d="M14 3L30 5.5L32 7V17L20 21L14 16Z" fill="#e8b84a" stroke="#4a3505" stroke-width="1"/><path d="M14 3L24 12L32 7" fill="none" stroke="#4a3505" stroke-width="1.2"/><path d="M21 23L27 30.5" stroke="#111" stroke-width="3"/><circle cx="12" cy="17.5" r="9.3" fill="#ececec" stroke="#cfcfcf" stroke-width="1"/><rect x="18" y="11" width="6.5" height="9.5" fill="#18b030" stroke="#0a5a18" stroke-width="0.8"/><path d="M19 14H23.5M21.2 12V19.5" stroke="#0a5a18" stroke-width="1"/><path d="M9 10.5H18.5V13.2H15.6V22.8H18.5V25.5H9V22.8H11.9V13.2H9Z" fill="#f2c81a" stroke="#111" stroke-width="1.4"/></svg>
<svg class="a" style="left:312px;top:864px" width="32" height="31" viewBox="0 0 32 31"><defs><linearGradient id="npg" x1="0" y1="0" x2="1" y2="1"><stop offset="0" stop-color="#bfe6f0"/><stop offset="0.5" stop-color="#5fb4cc"/><stop offset="1" stop-color="#8fd0e0"/></linearGradient></defs><path d="M26 4L30 6V25L26.5 29Z" fill="#c8a860"/><path d="M24 3.5L27.5 5.5L25.5 30L19 27.5Z" fill="#f2f5f8" stroke="#c9d2da" stroke-width="0.6"/><path d="M20.5 10L26.5 11M20.3 13L26.2 14M20 16L26 17M19.8 19L25.8 20M19.6 22L25.6 23M19.4 25L25.4 26" stroke="#c3ccd6" stroke-width="0.6"/><path d="M11.5 2.5L27 4.5L20.5 27.5L1.5 20Z" fill="url(#npg)"/><path d="M11.5 1.5V3.5M13.5 1.7V3.7M15.5 2V4M17.5 2.2V4.2M19.5 2.5V4.5M21.5 2.7V4.7M23.5 3V5M25.5 3.2V5.2" stroke="#8a8f96" stroke-width="0.9"/></svg>
<svg class="a" style="left:375px;top:864px" width="32" height="32" viewBox="0 0 32 32"><ellipse cx="16" cy="30" rx="9" ry="1.3" fill="#2a6a86" opacity="0.45"/><circle cx="16" cy="15.5" r="13" fill="none" stroke="#2a7bd6" stroke-width="4"/><path d="M10.5 7.5V23.5" stroke="#2a7bd6" stroke-width="3.6"/><path d="M8.5 7.5H20.5L11.5 15.8" fill="none" stroke="#2a7bd6" stroke-width="3.4"/><path d="M13.5 13L26.5 25.5" stroke="#2a7bd6" stroke-width="4"/></svg>
<svg class="a" style="left:1388px;top:878px" width="10" height="7" viewBox="0 0 10 7"><path d="M0.8 5.8L4.8 1.2L8.8 5.8Z" fill="#fff" stroke="#6a8a92" stroke-width="0.5"/></svg>
<svg class="a" style="left:1408px;top:872px" width="18" height="18" viewBox="0 0 18 18"><path d="M1.4 5.6H3.6L8.6 1.2V15.6L3.6 11.4H1.4Z" fill="#e9eef0" stroke="#2a3a40" stroke-width="0.8"/><path d="M7.4 2.6V14.2" stroke="#fff" stroke-width="1.6"/><circle cx="12.3" cy="12.3" r="4.1" fill="#fff" stroke="#e8141c" stroke-width="1.9"/><path d="M9.5 9.5L15.1 15.1" stroke="#e8141c" stroke-width="1.9"/></svg>
<svg class="a" style="left:1432px;top:872px" width="18" height="18" viewBox="0 0 18 18"><rect x="1.3" y="1.2" width="1.9" height="15.2" fill="#fff" stroke="#2a3a40" stroke-width="0.6"/><path d="M3.4 2.2Q7 1 9.4 2.8Q12.4 4.6 16 3.2Q14.6 5.6 13.6 6.4Q14.4 8.4 15.2 9.4Q12 10.8 9.2 9Q6.4 7.4 3.4 8.6Z" fill="#fff" stroke="#2a3a40" stroke-width="0.7"/></svg>
<svg class="a" style="left:1456px;top:872px" width="18" height="17" viewBox="0 0 18 17"><rect x="1.6" y="1.6" width="4.6" height="9.8" rx="1.2" fill="#4f97a6" stroke="#fff" stroke-width="1.3"/><circle cx="3.9" cy="4.4" r="1.2" fill="none" stroke="#fff" stroke-width="0.9"/><path d="M3.9 5.6V9" stroke="#fff" stroke-width="0.9"/><path d="M3.9 11.4V14.6H8" fill="none" stroke="#fff" stroke-width="1.2"/><rect x="7.2" y="3" width="9.2" height="7.6" fill="#4f97a6" stroke="#fff" stroke-width="1.4"/><path d="M11.8 10.6V13.8M8.6 14.4H15.4" stroke="#fff" stroke-width="1.4"/></svg>
<span class="t" style="left:1487px;top:875px;font-size:12px;color:#fff;width:23px;letter-spacing:-1.005px">ENG</span>
<span class="t" style="left:1541px;top:867px;font-size:12.5px;color:#fff;width:27px;letter-spacing:-0.856px">12:17</span>
<span class="t" style="left:1527px;top:884px;font-size:12.5px;color:#fff;width:54.5px;letter-spacing:-0.806px">22.03.2017</span>

</div>
</body></html>
